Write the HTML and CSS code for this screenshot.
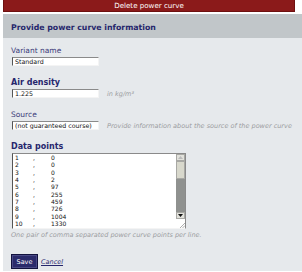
FILE: index.html
```html
<!DOCTYPE html>
<html lang="en">
<head>
    <meta charset="UTF-8">
    <title>Power curve</title>
    <link rel="stylesheet" href="styles.css">
</head>
<body>
    <div class="page">
        <div class="delete-bar">Delete power curve</div>
        <div class="panel">
            <h2>Provide power curve information</h2>
            <form class="panel-body">
                <div class="field">
                    <label for="variant">Variant name</label>
                    <input type="text" id="variant" value="Standard">
                </div>
                <div class="field">
                    <label for="density" class="required">Air density</label>
                    <div class="row">
                        <input type="text" id="density" value="1.225">
                        <span class="hint">in kg/m³</span>
                    </div>
                </div>
                <div class="field">
                    <label for="source">Source</label>
                    <div class="row">
                        <input type="text" id="source" value="(not guaranteed course)">
                        <span class="hint">Provide information about the source of the power curve</span>
                    </div>
                </div>
                <div class="field last">
                    <label for="points" class="required">Data points</label>
                    <div class="data-box">
                        <textarea id="points">1	,	0
2	,	0
3	,	0
4	,	2
5	,	97
6	,	255
7	,	459
8	,	726
9	,	1004
10	,	1330
11	,	1627
12	,	1854
13	,	1980
14	,	2030
15	,	2050
16	,	2050
17	,	2050
18	,	2050
19	,	2050
20	,	2050</textarea>
                        <div class="scrollbar">
                            <span class="sb-btn"><svg width="5" height="3" viewBox="0 0 5 3"><path d="M0 3 L2.5 0 L5 3 Z" fill="#bbb"/></svg></span>
                            <span class="sb-thumb"></span>
                            <span class="sb-track"></span>
                            <span class="sb-btn"><svg width="5" height="3" viewBox="0 0 5 3"><path d="M0 0 L5 0 L2.5 3 Z" fill="#111"/></svg></span>
                            <span class="sb-corner"><svg width="6" height="6" viewBox="0 0 6 6"><path d="M6 1 L1 6 M6 3.5 L3.5 6" stroke="#999" stroke-width="0.8"/></svg></span>
                        </div>
                    </div>
                    <div class="hint help">One pair of comma separated power curve points per line.</div>
                </div>
                <div class="actions">
                    <button type="submit">Save</button>
                    <a href="#">Cancel</a>
                </div>
            </form>
        </div>
    </div>
</body>
</html>
```

FILE: styles.css
```css
body {
    margin: 0;
    background-color: #fff;
    font-family: "DejaVu Sans", Verdana, sans-serif;
}
.page {
    padding-left: 3px;
    width: 299px;
}
.delete-bar {
    width: 290px;
    height: 11px;
    background-color: #8b1a1a;
    border: 1px solid #6e1010;
    border-top: none;
    color: #fff;
    font-size: 7.1px;
    line-height: 11px;
    text-align: center;
}
.panel {
    margin-top: 2px;
    background-color: #e6e9ec;
}
h2 {
    margin: 0;
    height: 20px;
    padding: 4px 0 0 8px;
    line-height: 20px;
    background-color: #c1c6c9;
    color: #26266c;
    font-size: 7.8px;
    font-weight: bold;
}
.panel-body {
    padding: 7px 8px 2px 8px;
    font-size: 7px;
}
.field {
    margin-bottom: 11px;
}
.field.last {
    margin-bottom: 0;
}
label {
    display: block;
    margin-bottom: 1px;
    color: #3b3b7a;
    font-size: 7.5px;
    line-height: 11px;
}
label.required {
    font-weight: bold;
    color: #26266c;
    font-size: 8px;
}
.row {
    display: flex;
    align-items: center;
    gap: 8px;
}
input[type="text"] {
    display: block;
    box-sizing: border-box;
    width: 87px;
    height: 9px;
    padding: 0 2px;
    margin: 0 0 0 1px;
    border: 1px solid #f4f4f4;
    border-top-color: #8a8a8a;
    border-left-color: #555;
    background-color: #fff;
    font-family: "DejaVu Sans", sans-serif;
    font-size: 6.3px;
    line-height: 7px;
    color: #111;
}
.hint {
    color: #9a9ca0;
    font-style: italic;
    font-size: 6.5px;
}
.help {
    margin-top: 2px;
    line-height: 9px;
}
.data-box {
    display: flex;
    box-sizing: border-box;
    width: 174px;
    height: 76px;
    margin-left: 1px;
    border: 1px solid #f4f4f4;
    border-top-color: #8a8a8a;
    border-left-color: #555;
    border-right-color: #8a8a8a;
    background-color: #fff;
}
textarea {
    flex: 1;
    margin: 0;
    padding: 0 2px;
    border: none;
    outline: none;
    resize: none;
    overflow: hidden;
    background-color: #fff;
    font-family: "DejaVu Sans", sans-serif;
    font-size: 6px;
    line-height: 7.33px;
    tab-size: 18px;
    color: #111;
}
.scrollbar {
    display: flex;
    flex-direction: column;
    width: 9px;
}
.sb-btn {
    display: flex;
    align-items: center;
    justify-content: center;
    box-sizing: border-box;
    height: 7px;
    background-color: #e2e2dc;
    border: 1px solid #a8a8a4;
}
.sb-thumb {
    box-sizing: border-box;
    height: 18px;
    background-color: #d8d8cc;
    border: 1px solid #a8a8a4;
}
.sb-track {
    flex: 1;
    background-color: #8f918f;
}
.sb-corner {
    display: flex;
    align-items: flex-end;
    justify-content: flex-end;
    height: 9px;
    background-color: #fff;
}
.actions {
    display: flex;
    align-items: center;
    gap: 3px;
    margin-top: 14px;
}
button {
    box-sizing: border-box;
    width: 27px;
    height: 15px;
    padding: 0;
    background-color: #2b2b6b;
    color: #fff;
    border: 1px solid #12123e;
    box-shadow: inset 0 0 0 1px #4a4a86;
    font-family: "DejaVu Sans", sans-serif;
    font-size: 6.5px;
    cursor: pointer;
}
.actions a {
    color: #26266c;
    font-size: 6.5px;
    font-style: italic;
}
```
